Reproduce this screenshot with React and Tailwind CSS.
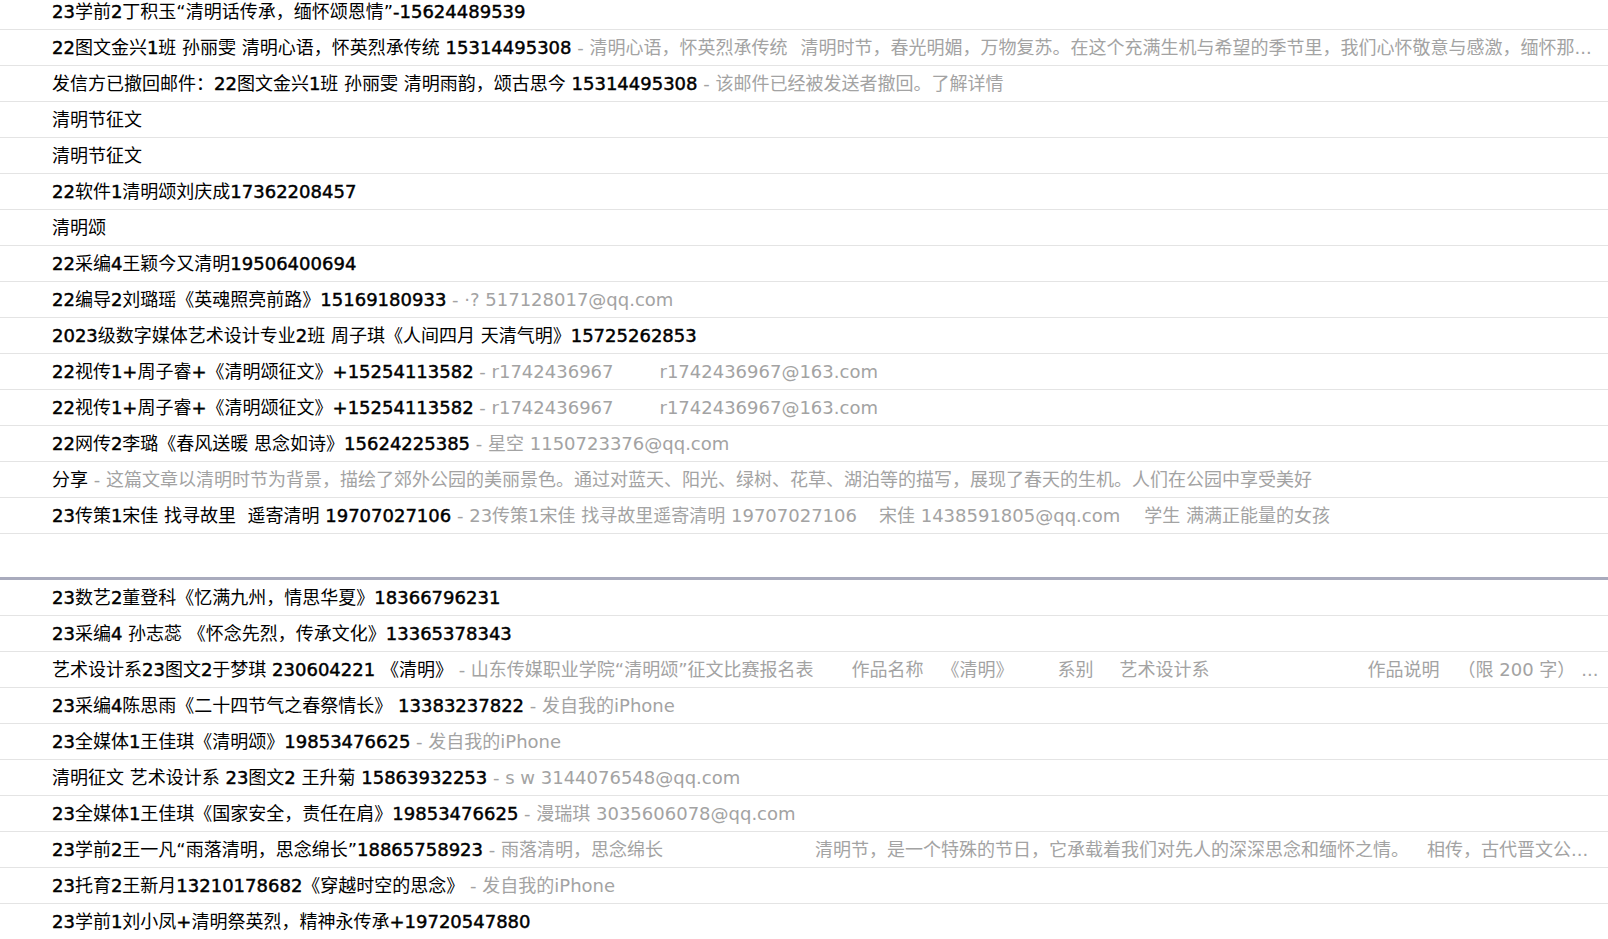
import React from "react";

const top = [
  { s: "23学前2丁积玉“清明话传承，缅怀颂恩情”-15624489539" },
  {
    s: "22图文金兴1班 孙丽雯 清明心语，怀英烈承传统 15314495308",
    d: [
      { t: "清明心语，怀英烈承传统" },
      { t: "清明时节，春光明媚，万物复苏。在这个充满生机与希望的季节里，我们心怀敬意与感激，缅怀那...", c: "ml-[13px]" },
    ],
  },
  {
    s: "发信方已撤回邮件：22图文金兴1班 孙丽雯 清明雨韵，颂古思今 15314495308",
    d: [{ t: "该邮件已经被发送者撤回。了解详情" }],
  },
  { s: "清明节征文" },
  { s: "清明节征文" },
  { s: "22软件1清明颂刘庆成17362208457" },
  { s: "清明颂" },
  { s: "22采编4王颖今又清明19506400694" },
  { s: "22编导2刘璐瑶《英魂照亮前路》15169180933", d: [{ t: "·? 517128017@qq.com" }] },
  { s: "2023级数字媒体艺术设计专业2班 周子琪《人间四月 天清气明》15725262853" },
  {
    s: "22视传1+周子睿+《清明颂征文》+15254113582",
    d: [{ t: "r1742436967" }, { t: "r1742436967@163.com", c: "ml-[46px]" }],
  },
  {
    s: "22视传1+周子睿+《清明颂征文》+15254113582",
    d: [{ t: "r1742436967" }, { t: "r1742436967@163.com", c: "ml-[46px]" }],
  },
  { s: "22网传2李璐《春风送暖 思念如诗》15624225385", d: [{ t: "星空 1150723376@qq.com" }] },
  {
    s: "分享",
    d: [
      {
        t: "这篇文章以清明时节为背景，描绘了郊外公园的美丽景色。通过对蓝天、阳光、绿树、花草、湖泊等的描写，展现了春天的生机。人们在公园中享受美好",
      },
    ],
  },
  {
    s: "23传策1宋佳 找寻故里  遥寄清明 19707027106",
    d: [
      { t: "23传策1宋佳 找寻故里遥寄清明 19707027106" },
      { t: "宋佳 1438591805@qq.com", c: "ml-[22px]" },
      { t: "学生 满满正能量的女孩", c: "ml-[24px]" },
    ],
  },
];

const bottom = [
  { s: "23数艺2董登科《忆满九州，情思华夏》18366796231" },
  { s: "23采编4 孙志蕊 《怀念先烈，传承文化》13365378343" },
  {
    s: "艺术设计系23图文2于梦琪 230604221 《清明》",
    d: [
      { t: "山东传媒职业学院“清明颂”征文比赛报名表" },
      { t: "作品名称", c: "ml-[38px]" },
      { t: "《清明》", c: "ml-[18px]" },
      { t: "系别", c: "ml-[44px]" },
      { t: "艺术设计系", c: "ml-[26px]" },
      { t: "作品说明", c: "ml-[158px]" },
      { t: "（限 200 字）", c: "ml-[18px]" },
      { t: "...", c: "ml-[6px]" },
    ],
  },
  { s: "23采编4陈思雨《二十四节气之春祭情长》 13383237822", d: [{ t: "发自我的iPhone" }] },
  { s: "23全媒体1王佳琪《清明颂》19853476625", d: [{ t: "发自我的iPhone" }] },
  { s: "清明征文 艺术设计系 23图文2 王升菊 15863932253", d: [{ t: "s w 3144076548@qq.com" }] },
  { s: "23全媒体1王佳琪《国家安全，责任在肩》19853476625", d: [{ t: "漫瑞琪 3035606078@qq.com" }] },
  {
    s: "23学前2王一凡“雨落清明，思念绵长”18865758923",
    d: [
      { t: "雨落清明，思念绵长" },
      { t: "清明节，是一个特殊的节日，它承载着我们对先人的深深思念和缅怀之情。", c: "ml-[152px]" },
      { t: "相传，古代晋文公...", c: "ml-[18px]" },
    ],
  },
  { s: "23托育2王新月13210178682《穿越时空的思念》", d: [{ t: "发自我的iPhone" }] },
  { s: "23学前1刘小凤+清明祭英烈，精神永传承+19720547880" },
];

function Subject({ text }) {
  const parts = text.split(/([\x21-\x7e]+)/);
  return (
    <span className="text-black">
      {parts.map((p, i) =>
        /^[\x21-\x7e]+$/.test(p) ? (
          <span key={i} className="[-webkit-text-stroke:0.45px_#000]">
            {p}
          </span>
        ) : (
          <span key={i}>{p}</span>
        )
      )}
    </span>
  );
}

function Row({ s, d }) {
  return (
    <div className="h-[36px] border-b border-[#e4e4e4] flex items-center pt-[1px] pl-[52px] pr-[13px] overflow-hidden whitespace-pre">
      <Subject text={s} />
      {d && (
        <span className="text-[#a3a3a3] flex items-center">
          <span>{" - "}</span>
          {d.map((x, i) => (
            <span key={i} className={x.c || ""}>
              {x.t}
            </span>
          ))}
        </span>
      )}
    </div>
  );
}

export default function App() {
  return (
    <div className="w-[1608px] h-[939px] overflow-hidden bg-white text-[18px] leading-none font-['DejaVu_Sans','Noto_Sans_CJK_SC',sans-serif]">
      <div className="-mt-[6px]">
        {top.map((r, i) => (
          <Row key={i} {...r} />
        ))}
      </div>
      <div className="h-[43px]" />
      <div className="h-[3px] bg-[#a9abbd]" />
      <div>
        {bottom.map((r, i) => (
          <Row key={i} {...r} />
        ))}
      </div>
    </div>
  );
}
